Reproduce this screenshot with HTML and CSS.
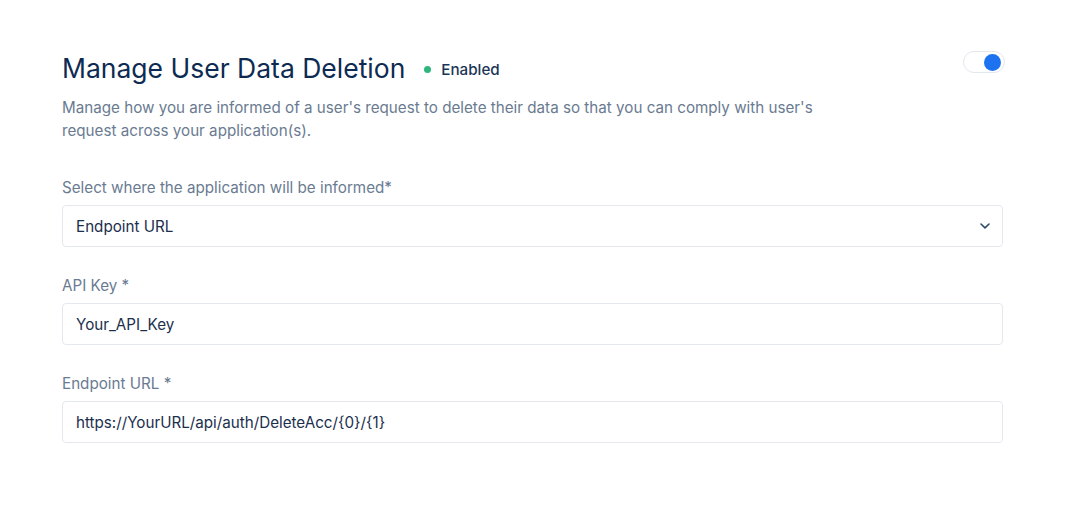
FILE: index.html
```html
<!DOCTYPE html>
<html>
<head>
<meta charset="utf-8">
<link rel="stylesheet" href="styles.css">
</head>
<body>
<div class="panel">
  <div class="header">
    <div class="title-row">
      <h1 class="title">Manage User Data Deletion</h1>
      <span class="status"><span class="dot"></span>Enabled</span>
    </div>
    <div class="toggle"><span class="knob"></span></div>
  </div>
  <p class="desc">Manage how you are informed of a user's request to delete their data so that you can comply with user's<br>request across your application(s).</p>

  <div class="field first">
    <label class="label">Select where the application will be informed*</label>
    <div class="box select">
      <span>Endpoint URL</span>
      <svg class="chev" width="12" height="8" viewBox="0 0 12 8"><path d="M2 2 L6 5.8 L10 2" fill="none" stroke="#2c4a6e" stroke-width="1.6" stroke-linecap="round" stroke-linejoin="round"/></svg>
    </div>
  </div>
  <div class="field">
    <label class="label">API Key *</label>
    <div class="box"><span>Your_API_Key</span></div>
  </div>
  <div class="field">
    <label class="label">Endpoint URL *</label>
    <div class="box"><span>https://YourURL/api/auth/DeleteAcc/{0}/{1}</span></div>
  </div>
</div>
</body>
</html>
```
FILE: styles.css
```css
html, body {
  margin: 0;
  padding: 0;
  background: #ffffff;
  font-family: Inter, "Noto Sans", Arial, sans-serif;
}
.panel {
  width: 941px;
  margin-left: 62px;
  padding-top: 50px;
}
.header {
  display: flex;
  justify-content: space-between;
  align-items: flex-start;
}
.title-row {
  display: flex;
  align-items: center;
  padding-top: 2px;
}
.title {
  margin: 0;
  font-size: 26.5px;
  font-weight: 400;
  color: #0d2b52;
  line-height: 32px;
}
.status {
  display: flex;
  align-items: center;
  margin-left: 19px;
  font-size: 15.2px;
  font-weight: 500;
  color: #1b3557;
  padding-top: 3px;
}
.dot {
  width: 7px;
  height: 7px;
  border-radius: 50%;
  background: #2eb67d;
  margin-right: 10px;
}
.toggle {
  width: 34px;
  height: 20px;
  border: 1px solid #e3e7ee;
  border-radius: 11px;
  background: #fff;
  display: flex;
  align-items: center;
  justify-content: flex-end;
  padding: 0 3px;
  margin-top: 1px;
  margin-right: -2px;
  box-sizing: content-box;
}
.knob {
  width: 17px;
  height: 17px;
  border-radius: 50%;
  background: #1d72f0;
}
.desc {
  margin: 12px 0 0 0;
  font-size: 15.2px;
  line-height: 23px;
  color: #6a7b91;
}
.field {
  margin-top: 29px;
}
.field.first {
  margin-top: 36px;
}
.label {
  display: block;
  font-size: 15.2px;
  line-height: 20px;
  color: #6a7b91;
  margin-bottom: 7px;
}
.box {
  height: 42px;
  border: 1px solid #e4e8ee;
  border-radius: 4px;
  display: flex;
  align-items: center;
  justify-content: space-between;
  padding: 0 11px 0 13px;
  font-size: 15.2px;
  color: #1b2f4d;
  box-sizing: border-box;
}
```
